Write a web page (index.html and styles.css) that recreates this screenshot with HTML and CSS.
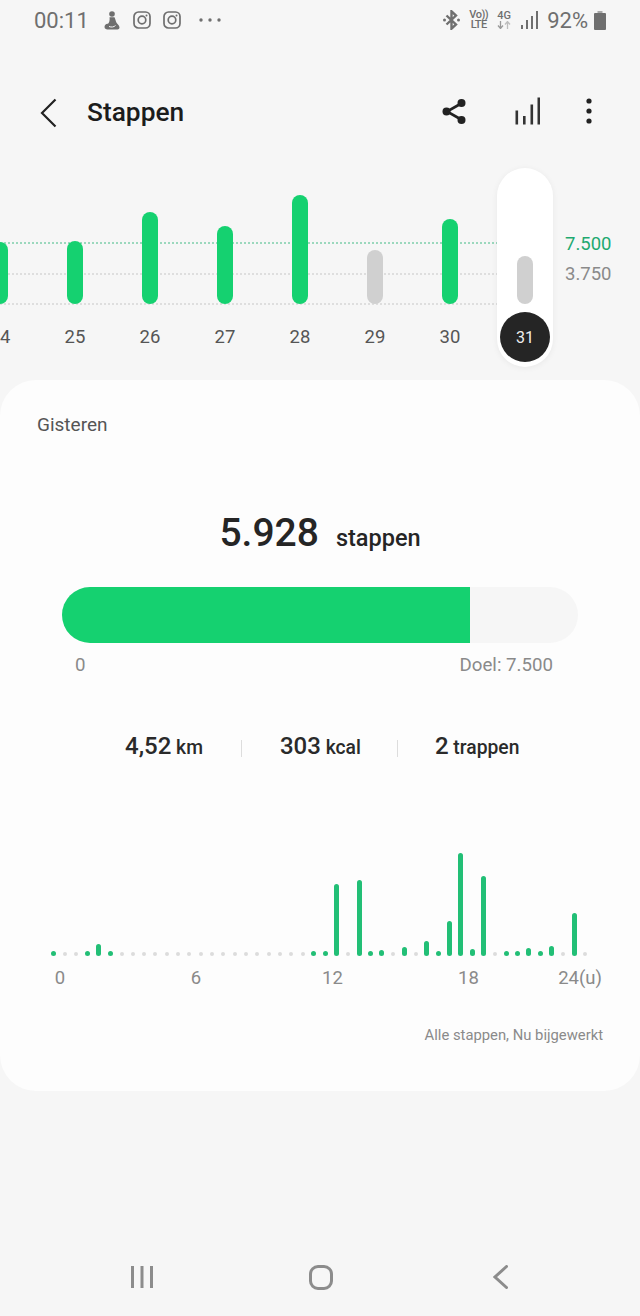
FILE: index.html

```html
<!DOCTYPE html>
<html>

<head>
    <meta charset="utf-8">
    <title>Stappen</title>
    <link rel="stylesheet" href="styles.css">
</head>

<body>
<div class="statusbar">
    <span class="clock">00:11</span>
    <svg class="st-person" width="16" height="19" viewBox="0 0 16 19">
        <circle cx="8" cy="3" r="2.800" fill="#6f6f6f"/>
        <path d="M5.500 6.200h5c1 2 1.200 4 2.200 5.800 1.500 1.500 2.800 3 2.800 4.500 0 1-1 2-2 2H7c-3 0-6.500 .5-6.500-2.500 0-2 1.800-3.700 3.500-3.200 1.200-.8 2-3.800 1.500-6.600z" fill="#6f6f6f"/>
        <path d="M5 15.500c2.500 1 5 .5 6.500-1" fill="none" stroke="#f6f6f6" stroke-width="1"/>
    </svg>
    <svg class="st-insta" width="18" height="18" viewBox="0 0 18 18">
        <rect x="1" y="1" width="16" height="16" rx="4.500" fill="none" stroke="#6f6f6f" stroke-width="1.700"/>
        <circle cx="9" cy="9" r="3.800" fill="none" stroke="#6f6f6f" stroke-width="1.700"/>
        <circle cx="13.500" cy="4.500" r="1" fill="#6f6f6f"/>
    </svg>
    <svg class="st-insta2" width="18" height="18" viewBox="0 0 18 18">
        <rect x="1" y="1" width="16" height="16" rx="4.500" fill="none" stroke="#6f6f6f" stroke-width="1.700"/>
        <circle cx="9" cy="9" r="3.800" fill="none" stroke="#6f6f6f" stroke-width="1.700"/>
        <circle cx="13.500" cy="4.500" r="1" fill="#6f6f6f"/>
    </svg>
    <svg class="st-more" width="22" height="4" viewBox="0 0 22 4">
        <circle cx="2" cy="2" r="1.700" fill="#6f6f6f"/>
        <circle cx="11" cy="2" r="1.700" fill="#6f6f6f"/>
        <circle cx="20" cy="2" r="1.700" fill="#6f6f6f"/>
    </svg>
    <div class="st-right">
        <svg width="17" height="20" viewBox="0 0 17 20">
            <path d="M3.500 5.500l9.500 9-4.500 4.200V1.300L13 5.500l-9.500 9" fill="none" stroke="#6f6f6f" stroke-width="2.400"/>
            <circle cx="1.500" cy="10" r="1.500" fill="#6f6f6f"/>
            <circle cx="15.500" cy="10" r="1.500" fill="#6f6f6f"/>
        </svg>
        <div class="st-volte"><span>Vo))</span><span>LTE</span></div>
        <div class="st-4g">
            <span>4G</span>
            <svg width="14" height="8" viewBox="0 0 14 8">
                <path d="M3.500 0v7M1 4.500l2.500 3 2.500-3" fill="none" stroke="#9a9a9a" stroke-width="1.300"/>
                <path d="M10.500 8V1M8 3.500l2.500-3 2.500 3" fill="none" stroke="#bdbdbd" stroke-width="1.300"/>
            </svg>
        </div>
        <svg class="st-signal" width="17" height="18" viewBox="0 0 17 18">
            <rect x="0" y="14" width="2" height="4" fill="#6f6f6f"/>
            <rect x="5" y="9" width="2" height="9" fill="#6f6f6f"/>
            <rect x="10" y="5" width="2" height="13" fill="#6f6f6f"/>
            <rect x="15" y="0" width="2" height="18" fill="#6f6f6f"/>
        </svg>
        <span class="battery-text">92%</span>
        <svg width="12" height="19" viewBox="0 0 12 19">
            <rect x="3.500" y="0" width="5" height="2" fill="#a8a8a8"/>
            <rect x="0" y="2" width="12" height="17" rx="1" fill="#6f6f6f"/>
        </svg>
    </div>
</div>

<div class="toolbar">
    <svg class="tb-back" width="17" height="30" viewBox="0 0 17 30">
        <path d="M15.500 1.500L2 15l13.500 13.500" fill="none" stroke="#222" stroke-width="2.200"/>
    </svg>
    <h1 class="title">Stappen</h1>
    <div class="tb-actions">
        <svg width="25" height="27" viewBox="0 0 25 27">
            <path d="M20 5L5 13.500 20 22" fill="none" stroke="#222" stroke-width="2.600"/>
            <circle cx="19.500" cy="5" r="4" fill="#222"/>
            <circle cx="4.500" cy="13.500" r="4" fill="#222"/>
            <circle cx="19.500" cy="22" r="4" fill="#222"/>
        </svg>
        <svg class="tb-chart" width="25" height="28" viewBox="0 0 25 28">
            <rect x="0.500" y="13.500" width="2.600" height="14" fill="#333"/>
            <rect x="8" y="19" width="2.600" height="8.500" fill="#333"/>
            <rect x="15.500" y="7.500" width="2.600" height="20" fill="#333"/>
            <rect x="22.500" y="0.500" width="2.600" height="27" fill="#333"/>
        </svg>
        <svg class="tb-more" width="6" height="26" viewBox="0 0 6 26">
            <circle cx="3" cy="3" r="2.600" fill="#222"/>
            <circle cx="3" cy="13" r="2.600" fill="#222"/>
            <circle cx="3" cy="23" r="2.600" fill="#222"/>
        </svg>
    </div>
</div>

<div class="week">
    <div class="guide guide-goal"></div>
    <div class="guide guide-half"></div>
    <div class="guide guide-zero"></div>
    <div class="week-row">
        <div class="day"><div class="plot"><i class="bar" style="height:62px"></i></div><span class="day-num">24</span></div>
        <div class="day"><div class="plot"><i class="bar" style="height:63px"></i></div><span class="day-num">25</span></div>
        <div class="day"><div class="plot"><i class="bar" style="height:92px"></i></div><span class="day-num">26</span></div>
        <div class="day"><div class="plot"><i class="bar" style="height:78px"></i></div><span class="day-num">27</span></div>
        <div class="day"><div class="plot"><i class="bar" style="height:109px"></i></div><span class="day-num">28</span></div>
        <div class="day"><div class="plot"><i class="bar bar-low" style="height:54px"></i></div><span class="day-num">29</span></div>
        <div class="day"><div class="plot"><i class="bar" style="height:85px"></i></div><span class="day-num">30</span></div>
        <div class="day day-sel"><div class="plot"><i class="bar bar-low" style="height:48px"></i></div><span class="day-circle">31</span></div>
        <div class="legend">
            <span class="legend-goal">7.500</span>
            <span class="legend-half">3.750</span>
        </div>
    </div>
</div>

<div class="card">
    <div class="card-date">Gisteren</div>
    <div class="total"><span class="total-num">5.928</span><span class="total-unit">stappen</span></div>
    <div class="progress"><div class="progress-fill" style="width:79%"></div></div>
    <div class="progress-axis"><span>0</span><span>Doel: 7.500</span></div>

    <div class="stats">
        <span class="stat"><b>4,52</b> km</span>
        <i class="stat-sep"></i>
        <span class="stat"><b>303</b> kcal</span>
        <i class="stat-sep stat-sep-2"></i>
        <span class="stat stat-last"><b>2</b> trappen</span>
    </div>

    <!-- 48 halve uren -->
    <div class="hours">
        <i class="h"></i><i class="h off"></i><i class="h off"></i><i class="h"></i><i class="h" style="height:12px"></i><i class="h"></i>
        <i class="h off"></i><i class="h off"></i><i class="h off"></i><i class="h off"></i><i class="h off"></i><i class="h off"></i>
        <i class="h off"></i><i class="h off"></i><i class="h off"></i><i class="h off"></i><i class="h off"></i><i class="h off"></i>
        <i class="h off"></i><i class="h off"></i><i class="h off"></i><i class="h off"></i><i class="h off"></i><i class="h"></i>
        <i class="h"></i><i class="h" style="height:72px"></i><i class="h off"></i><i class="h" style="height:76px"></i><i class="h"></i><i class="h" style="height:6px"></i>
        <i class="h off"></i><i class="h" style="height:9px"></i><i class="h off"></i><i class="h" style="height:15px"></i><i class="h"></i><i class="h" style="height:35px"></i>
        <i class="h" style="height:103px"></i><i class="h" style="height:7px"></i><i class="h" style="height:80px"></i><i class="h off"></i><i class="h"></i><i class="h"></i>
        <i class="h" style="height:8px"></i><i class="h"></i><i class="h" style="height:10px"></i><i class="h off"></i><i class="h" style="height:43px"></i><i class="h off"></i>
    </div>
    <div class="hours-axis">
        <span class="tick">0</span>
        <span class="tick">6</span>
        <span class="tick">12</span>
        <span class="tick">18</span>
        <span class="tick-end">24(u)</span>
    </div>
    <div class="note">Alle stappen, Nu bijgewerkt</div>
</div>

<div class="navbar">
    <svg width="22" height="22" viewBox="0 0 22 22">
        <path d="M1.500 0v22M11 0v22M20.500 0v22" fill="none" stroke="#8c8c8c" stroke-width="3"/>
    </svg>
    <svg class="nav-home" width="24" height="25" viewBox="0 0 24 25">
        <rect x="1.500" y="1.500" width="21" height="22" rx="7.500" fill="none" stroke="#8c8c8c" stroke-width="3"/>
    </svg>
    <svg class="nav-back" width="15" height="24" viewBox="0 0 15 24">
        <path d="M13.500 1.500L2 12l11.500 10.500" fill="none" stroke="#8c8c8c" stroke-width="3" stroke-linecap="round"/>
    </svg>
</div>
</body>

</html>
```

FILE: styles.css

```css
* {
    margin: 0px;
    padding: 0px;
    box-sizing: border-box;
}
html,
body {
    width: 640px;
    height: 1316px;
    overflow: hidden;
}
body {
    background: #f6f6f6;
    font-family: Roboto, "Liberation Sans", sans-serif;
    color: #252525;
}
i {
    display: block;
}

/* status bar */
.statusbar {
    display: flex;
    align-items: center;
    height: 40px;
    padding-left: 34px;
    color: #6f6f6f;
}
.clock {
    font-size: 22px;
}
.st-person {
    margin-left: 15px;
}
.st-insta {
    margin-left: 13px;
}
.st-insta2 {
    margin-left: 12px;
}
.st-more {
    margin-left: 18px;
}
.st-right {
    display: flex;
    align-items: center;
    margin-left: auto;
    padding-right: 34px;
}
.st-volte,
.st-4g {
    display: flex;
    flex-direction: column;
    align-items: center;
    font-size: 11px;
    font-weight: 500;
    line-height: 10px;
}
.st-volte {
    margin-left: 9px;
    letter-spacing: -0.5px;
}
.st-4g {
    margin-left: 9px;
}
.st-signal {
    margin-left: 10px;
}
.battery-text {
    font-size: 22px;
    margin-left: 9px;
    margin-right: 6px;
}

/* toolbar */
.toolbar {
    display: flex;
    align-items: center;
    height: 50px;
    margin-top: 48px;
    padding-left: 40px;
}
.title {
    margin-left: 30px;
    padding-bottom: 2px;
    font-size: 26.3px;
    font-weight: 500;
    color: #1c1c1c;
}
.tb-actions {
    display: flex;
    align-items: center;
    margin-left: auto;
    padding-right: 48px;
    padding-bottom: 4px;
}
.tb-chart {
    margin-left: 48px;
}
.tb-more {
    margin-left: 46px;
}

/* week chart */
.week {
    position: relative;
    margin-top: 30px;
}
.guide {
    position: absolute;
    left: 0;
    width: 500px;
    height: 2px;
    background-image: linear-gradient(to right, #dedede 2px, transparent 2px);
    background-size: 4px 2px;
}
.guide-goal {
    top: 74px;
    background-image: linear-gradient(to right, #9bd8bd 2px, transparent 2px);
}
.guide-half {
    top: 105px;
}
.guide-zero {
    top: 135px;
}
.week-row {
    position: relative;
    display: flex;
    align-items: flex-start;
    margin-left: -37.5px;
}
.day {
    flex: none;
    display: flex;
    flex-direction: column;
    align-items: center;
    width: 75px;
}
.day-sel {
    width: 56px;
    margin: 0 9.5px;
    padding-bottom: 5px;
    background: #fff;
    border-radius: 28px;
    box-shadow: 0 1px 6px rgba(0, 0, 0, 0.06);
}
.plot {
    display: flex;
    align-items: flex-end;
    height: 136px;
}
.bar {
    width: 16px;
    background: #15d170;
    border-radius: 8px;
}
.bar-low {
    background: #d0d0d0;
}
.day-num {
    margin-top: 21px;
    font-size: 18.5px;
    line-height: 24px;
    color: #555;
}
.day-circle {
    display: flex;
    align-items: center;
    justify-content: center;
    width: 50px;
    height: 50px;
    margin-top: 8px;
    border-radius: 50%;
    background: #252525;
    color: #eee;
    font-size: 16px;
}
.legend {
    flex: none;
    display: flex;
    flex-direction: column;
    margin-left: 2.5px;
    padding-top: 61px;
    font-size: 18.5px;
    line-height: 30px;
}
.legend-goal {
    color: #1ea970;
}
.legend-half {
    color: #8a8a8a;
}

/* card */
.card {
    margin-top: 13px;
    padding: 33px 0 46px;
    background: #fdfdfd;
    border-radius: 36px;
}
.card-date {
    padding-left: 37px;
    font-size: 19px;
    line-height: 24px;
    color: #555;
}
.total {
    display: flex;
    align-items: baseline;
    justify-content: center;
    height: 48px;
    margin-top: 72px;
    line-height: 48px;
}
.total-num {
    font-size: 39px;
    font-weight: 500;
}
.total-unit {
    margin-left: 17px;
    font-size: 23.5px;
    font-weight: 500;
}
.progress {
    height: 56px;
    margin: 30px 62px 0;
    overflow: hidden;
    background: #f6f6f6;
    border-radius: 28px;
}
.progress-fill {
    height: 100%;
    background: #15d170;
}
.progress-axis {
    display: flex;
    justify-content: space-between;
    margin: 11px 87px 0 75px;
    font-size: 18.7px;
    line-height: 22px;
    color: #8a8a8a;
}
.stats {
    display: flex;
    align-items: center;
    gap: 38px;
    height: 30px;
    margin-top: 55px;
    padding-left: 125px;
}
.stat {
    font-size: 19.3px;
    font-weight: 500;
    color: #2a2a2a;
}
.stat b {
    font-size: 24px;
    font-weight: 500;
}
.stat-sep {
    width: 1px;
    height: 17px;
    margin-top: 5px;
    background: #ddd;
}
.stat-sep-2 {
    margin-left: -2px;
}
.stat-last {
    margin-left: -1px;
}
.hours {
    display: flex;
    align-items: flex-end;
    height: 104px;
    margin: 91px 0 0 48px;
}
.h {
    flex: none;
    width: 5px;
    height: 5px;
    margin: 0 3.165px;
    background: #22bf76;
    border-radius: 2.5px;
}
.h.off {
    width: 4px;
    height: 4px;
    margin: 0 3.665px 0.5px;
    background: #dcdcdc;
}
.hours-axis {
    display: flex;
    margin-top: 11px;
    padding: 0 38px 0 50px;
    font-size: 18.5px;
    line-height: 22px;
    color: #8a8a8a;
}
.tick {
    flex: none;
    width: 20px;
    text-align: center;
}
.tick + .tick {
    margin-left: 116px;
}
.tick-end {
    margin-left: auto;
}
.note {
    margin-top: 36px;
    padding-right: 37px;
    font-size: 14.8px;
    line-height: 20px;
    text-align: right;
    color: #8a8a8a;
}

/* nav */
.navbar {
    display: flex;
    align-items: center;
    height: 44px;
    margin-top: 164px;
    padding-left: 131px;
}
.nav-home {
    margin-left: 156px;
}
.nav-back {
    margin-left: 160px;
}
```
